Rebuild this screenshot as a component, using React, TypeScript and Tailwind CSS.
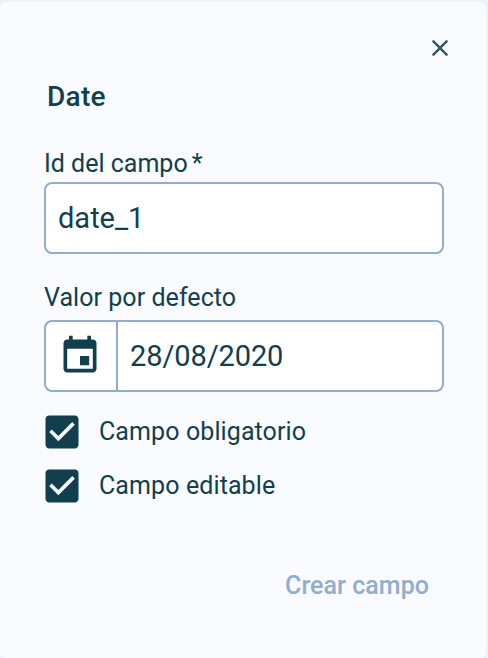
import React from 'react'

interface CheckRowProps {
  label: string
}

function CheckRow({ label }: CheckRowProps) {
  return (
    <label className="flex items-center h-[54px]">
      <svg className="w-11 h-11 -ml-1" viewBox="0 0 24 24" fill="#113f4d">
        <path d="M19 3H5c-1.11 0-2 .9-2 2v14c0 1.1.89 2 2 2h14c1.11 0 2-.9 2-2V5c0-1.1-.89-2-2-2zm-9 14l-5-5 1.41-1.41L10 14.17l7.59-7.59L19 8l-9 9z" />
      </svg>
      <span className="ml-[15px] text-[25px] tracking-[0.1px]">{label}</span>
    </label>
  )
}

export default function App() {
  return (
    <div className="w-[488px] h-[658px] pt-0.5 pr-0.5 bg-[#ebf2f9] font-['Roboto',sans-serif] text-[#113f4d]">
      <div className="w-[486px] h-[656px] bg-[#f9fbff] rounded-md px-11">
        <div className="flex justify-end pt-8 -mr-3">
          <svg className="w-7 h-7" viewBox="0 0 24 24" fill="#2c5566">
            <path d="M19 6.41L17.59 5 12 10.59 6.41 5 5 6.41 10.59 12 5 17.59 6.41 19 12 13.41 17.59 19 19 17.59 13.41 12z" />
          </svg>
        </div>
        <h1 className="mt-[17px] ml-[3px] h-9 leading-9 text-[28px] font-medium tracking-[0.3px]">Date</h1>
        <p className="mt-[31px] h-9 leading-9 text-[25px]">
          Id del campo<span className="ml-1">*</span>
        </p>
        <div className="w-[400px] h-[72px] flex items-center bg-white border-2 border-[#91adcf] rounded-lg pl-3 pt-0.5 text-[29px]">date_1</div>
        <p className="mt-[26px] h-9 leading-9 text-[25px] tracking-[0.05px]">Valor por defecto</p>
        <div className="mt-1 w-[400px] h-[72px] flex bg-white border-2 border-[#91adcf] rounded-lg text-[29px]">
          <div className="w-[72px] pr-0.5 border-r-2 border-[#91adcf] flex items-center justify-center">
            <svg className="w-11 h-11" viewBox="0 0 24 24" fill="#113f4d">
              <path d="M17 12h-5v5h5v-5zM16 1v2H8V1H6v2H5c-1.11 0-1.99.9-1.99 2L3 19c0 1.1.89 2 2 2h14c1.1 0 2-.9 2-2V5c0-1.1-.9-2-2-2h-1V1h-2zm3 18H5V8h14v11z" />
            </svg>
          </div>
          <div className="flex items-center pl-3 pt-0.5 tracking-[-0.1px]">28/08/2020</div>
        </div>
        <div className="mt-[13px]">
          <CheckRow label="Campo obligatorio" />
          <CheckRow label="Campo editable" />
        </div>
        <div className="flex justify-end mt-[55px] pr-[13px]">
          <button className="text-[25px] leading-9 font-medium tracking-[0.05px] text-[#91adcf]">Crear campo</button>
        </div>
      </div>
    </div>
  )
}
